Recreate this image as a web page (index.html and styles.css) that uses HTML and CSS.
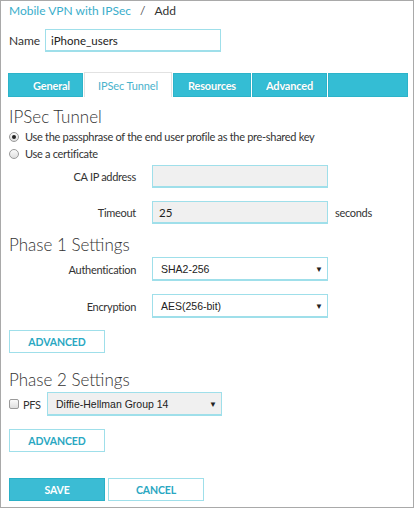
FILE: index.html
```html
<!DOCTYPE html>
<html>
<head>
<meta charset="utf-8">
<link rel="stylesheet" href="styles.css">
</head>
<body>
<div class="page">
  <div class="crumb"><a class="crumb-link">Mobile VPN with IPSec</a><span class="crumb-sep">/</span><span>Add</span></div>
  <div class="name-row">
    <label class="name-label">Name</label>
    <div class="field name-field">iPhone_users</div>
  </div>
  <div class="tabs">
    <div class="tab t1">General</div>
    <div class="tab t2 active">IPSec Tunnel</div>
    <div class="tab t3">Resources</div>
    <div class="tab t4">Advanced</div>
    <div class="tab t5"></div>
  </div>
  <h2 class="heading h-ipsec">IPSec Tunnel</h2>
  <div class="radio-row first"><span class="radio checked"></span><span>Use the passphrase of the end user profile as the pre-shared key</span></div>
  <div class="radio-row"><span class="radio"></span><span>Use a certificate</span></div>
  <div class="form-row r-ca">
    <label class="lbl">CA IP address</label>
    <div class="field grey plain"></div>
  </div>
  <div class="form-row r-timeout">
    <label class="lbl">Timeout</label>
    <div class="field grey plain">25</div>
    <span class="unit">seconds</span>
  </div>
  <h2 class="heading h-p1">Phase 1 Settings</h2>
  <div class="form-row r-auth">
    <label class="lbl">Authentication</label>
    <div class="field select">SHA2-256<span class="arrow">▼</span></div>
  </div>
  <div class="form-row r-enc">
    <label class="lbl">Encryption</label>
    <div class="field select">AES(256-bit)<span class="arrow">▼</span></div>
  </div>
  <div class="btn btn-outline b-adv1">ADVANCED</div>
  <h2 class="heading h-p2">Phase 2 Settings</h2>
  <div class="pfs-row">
    <span class="check"></span><span class="pfs-label">PFS</span>
    <div class="field select grey pfs-select">Diffie-Hellman Group 14<span class="arrow">▼</span></div>
  </div>
  <div class="btn btn-outline b-adv2">ADVANCED</div>
  <div class="actions">
    <div class="btn btn-primary">SAVE</div>
    <div class="btn btn-outline">CANCEL</div>
  </div>
</div>
</body>
</html>
```
FILE: styles.css
```css
html, body {
  margin: 0;
  padding: 0;
  background: #fff;
}
.page {
  box-sizing: border-box;
  width: 414px;
  height: 508px;
  border: 1px solid #a9a9a9;
  padding: 3px 5px 0 7px;
  font-family: Lato, "Open Sans", sans-serif;
  font-size: 11px;
  letter-spacing: -0.3px;
  color: #333;
}
.crumb {
  height: 14px;
  line-height: 14px;
  padding-left: 1px;
  font-size: 12px;
  letter-spacing: 0;
}
.crumb-link { color: #3aaecb; }
.crumb-sep { margin: 0 9px; color: #555; }
.name-row {
  display: flex;
  align-items: center;
  margin-top: 11px;
}
.name-label {
  width: 36px;
  padding-left: 1px;
  font-size: 12px;
  letter-spacing: 0;
}
.field {
  box-sizing: border-box;
  height: 23px;
  border: 1px solid #9fdfea;
  border-bottom-width: 2px;
  display: flex;
  align-items: center;
  padding-left: 8px;
  font-family: "Liberation Sans", Arial, sans-serif;
  font-size: 10.5px;
  letter-spacing: 0;
  color: #222;
  background: #fff;
  position: relative;
}
.field.plain {
  padding-left: 6px;
  font-family: Lato, sans-serif;
  font-size: 11.5px;
}
.name-field {
  width: 176px;
  padding-left: 5px;
  font-family: Lato, sans-serif;
  font-size: 11.5px;
}
.tabs {
  display: flex;
  gap: 1px;
  margin-top: 21px;
  height: 24px;
  width: 400px;
}
.tab {
  box-sizing: border-box;
  height: 24px;
  background: #34bdd4;
  border: 1px solid #2cb3c9;
  color: #fff;
  font-weight: bold;
  font-size: 11px;
  letter-spacing: -0.2px;
  display: flex;
  align-items: center;
  justify-content: center;
  text-shadow: 0 0 1px #2a9fb3;
}
.t1 { width: 75px; padding-left: 12px; }
.t2 { width: 88px; }
.t3 { width: 78px; }
.t4 { width: 75px; }
.t5 { width: 80px; }
.tab.active {
  background: #fff;
  color: #4ab3cc;
  font-weight: normal;
  border: 1px solid #e2e2e2;
  border-bottom: none;
  text-shadow: none;
  height: 25px;
  margin-top: -1px;
  letter-spacing: -0.1px;
}
.heading {
  margin: 0;
  font-weight: 300;
  font-size: 17px;
  letter-spacing: 0;
  line-height: 20px;
  height: 20px;
  padding-left: 1px;
  color: #333;
}
.h-ipsec { margin-top: 10px; }
.h-p1 { margin-top: 11px; }
.h-p2 { margin-top: 17px; }
.radio-row {
  display: flex;
  align-items: center;
  height: 17px;
  padding-left: 1px;
}
.radio-row.first { margin-top: 1px; }
.radio {
  box-sizing: border-box;
  width: 10px;
  height: 10px;
  border-radius: 50%;
  border: 1px solid #9a9a9a;
  background: linear-gradient(#fafafa, #dedede);
  margin-right: 6px;
  position: relative;
  flex: none;
}
.radio.checked::after {
  content: "";
  position: absolute;
  left: 2px;
  top: 2px;
  width: 4px;
  height: 4px;
  border-radius: 50%;
  background: #222;
}
.form-row {
  display: grid;
  grid-template-columns: 128px 176px auto;
  column-gap: 16px;
  align-items: center;
}
.form-row .field { grid-column: 2; }
.lbl {
  text-align: right;
  grid-column: 1;
}
.unit {
  margin-left: -9px;
}
.r-ca { margin-top: 3px; }
.r-timeout { margin-top: 13px; }
.r-auth { margin-top: 2px; }
.r-enc { margin-top: 13px; }
.r-auth .field, .r-enc .field { height: 24px; }
.grey { background: #f0f0f0; }
.select .arrow {
  position: absolute;
  right: 4px;
  top: 50%;
  transform: translateY(-50%);
  font-size: 8px;
  color: #222;
}
.btn {
  box-sizing: border-box;
  width: 96px;
  height: 23px;
  display: flex;
  align-items: center;
  justify-content: center;
  font-weight: bold;
  font-size: 10.5px;
  letter-spacing: -0.1px;
}
.btn-outline {
  border: 1px solid #9fdfea;
  color: #2aa7c2;
  background: #fff;
}
.btn-primary {
  background: #3bbcd4;
  border: 1px solid #2ab0c7;
  color: #fff;
}
.b-adv1 { margin-top: 12px; margin-left: 1px; }
.b-adv2 { margin-top: 13px; margin-left: 1px; }
.pfs-row {
  display: flex;
  align-items: center;
  margin-top: 2px;
  padding-left: 1px;
}
.check {
  box-sizing: border-box;
  width: 10px;
  height: 10px;
  border: 1px solid #9a9a9a;
  border-radius: 2px;
  background: linear-gradient(#fafafa, #dedede);
  margin-right: 4px;
}
.pfs-label { width: 24px; }
.pfs-select {
  width: 175px;
  height: 24px;
}
.actions {
  display: flex;
  gap: 3px;
  margin-top: 26px;
  margin-left: 1px;
}
```
